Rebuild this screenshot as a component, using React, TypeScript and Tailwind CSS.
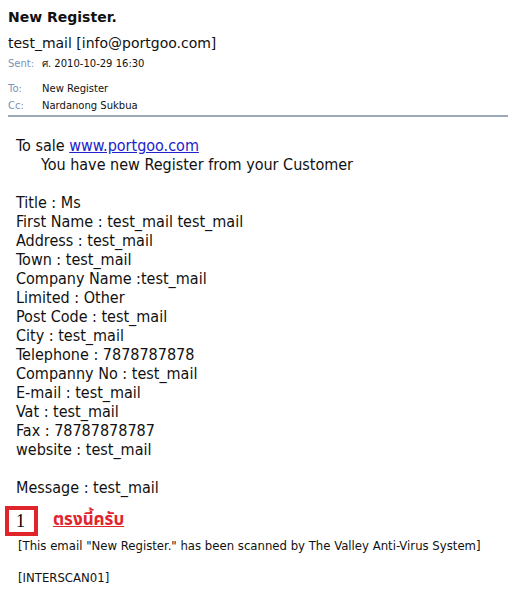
import React from 'react'

const fields = [
  'Title : Ms',
  'First Name : test_mail test_mail',
  'Address : test_mail',
  'Town : test_mail',
  'Company Name :test_mail',
  'Limited : Other',
  'Post Code : test_mail',
  'City : test_mail',
  'Telephone : 7878787878',
  'Companny No : test_mail',
  'E-mail : test_mail',
  'Vat : test_mail',
  'Fax : 78787878787',
  'website : test_mail',
]

export default function App() {
  return (
    <div className="w-[508px] h-[590px] bg-white overflow-hidden text-[#111] font-['DejaVu_Sans',sans-serif]">
      <div className="pl-2 pt-[8px]">
        <h1 className="text-[14px] font-bold leading-[18px]">New Register.</h1>
        <div className="mt-[8px] text-[14px] leading-[18px]">test_mail [info@portgoo.com]</div>
        <div className="mt-[5px] flex text-[10px] leading-[13px]">
          <span className="w-[34px] text-[#7a92b8]">Sent:</span>
          <span>ศ. 2010-10-29 16:30</span>
        </div>
        <div className="mt-[10px] flex text-[10px] leading-[17px]">
          <span className="w-[34px] text-[#7a92b8]">To:</span>
          <span>New Register</span>
        </div>
        <div className="flex text-[10px] leading-[17px]">
          <span className="w-[34px] text-[#7a92b8]">Cc:</span>
          <span>Nardanong Sukbua</span>
        </div>
        <div className="mt-[1px] h-[2px] bg-[#9aa8b8]" />
      </div>

      <div className="pl-4 pt-[19px] text-[16px] leading-[19px] font-['DejaVu_Sans_Condensed','DejaVu_Sans',sans-serif]">
        <div>
          To sale <a className="text-[#2222cc] underline">www.portgoo.com</a>
        </div>
        <div className="pl-[25px]">You have new Register from your Customer</div>
        <div className="h-[19px]" />
        {fields.map((f) => (
          <div key={f}>{f}</div>
        ))}
        <div className="h-[19px]" />
        <div>Message : test_mail</div>
      </div>

      <div className="mt-[9px] flex items-center pl-[5px]">
        <div className="w-[33px] h-[30px] border-[4px] border-[#e0242c] flex items-end pl-[7px] font-['Liberation_Serif',serif] text-[18px] leading-[21px] text-black">
          1
        </div>
        <span className="ml-[15px] text-[17px] font-bold text-[#e0242c] underline font-['Noto_Sans_Thai','Noto_Sans',sans-serif]">
          ตรงนี้ครับ
        </span>
      </div>
      <div className="pl-[18px] text-[13px] leading-[16px] font-['DejaVu_Sans_Condensed','DejaVu_Sans',sans-serif]">
        <div className="mt-[2px]">[This email "New Register." has been scanned by The Valley Anti-Virus System]</div>
        <div className="mt-[16px]">[INTERSCAN01]</div>
      </div>
    </div>
  )
}
